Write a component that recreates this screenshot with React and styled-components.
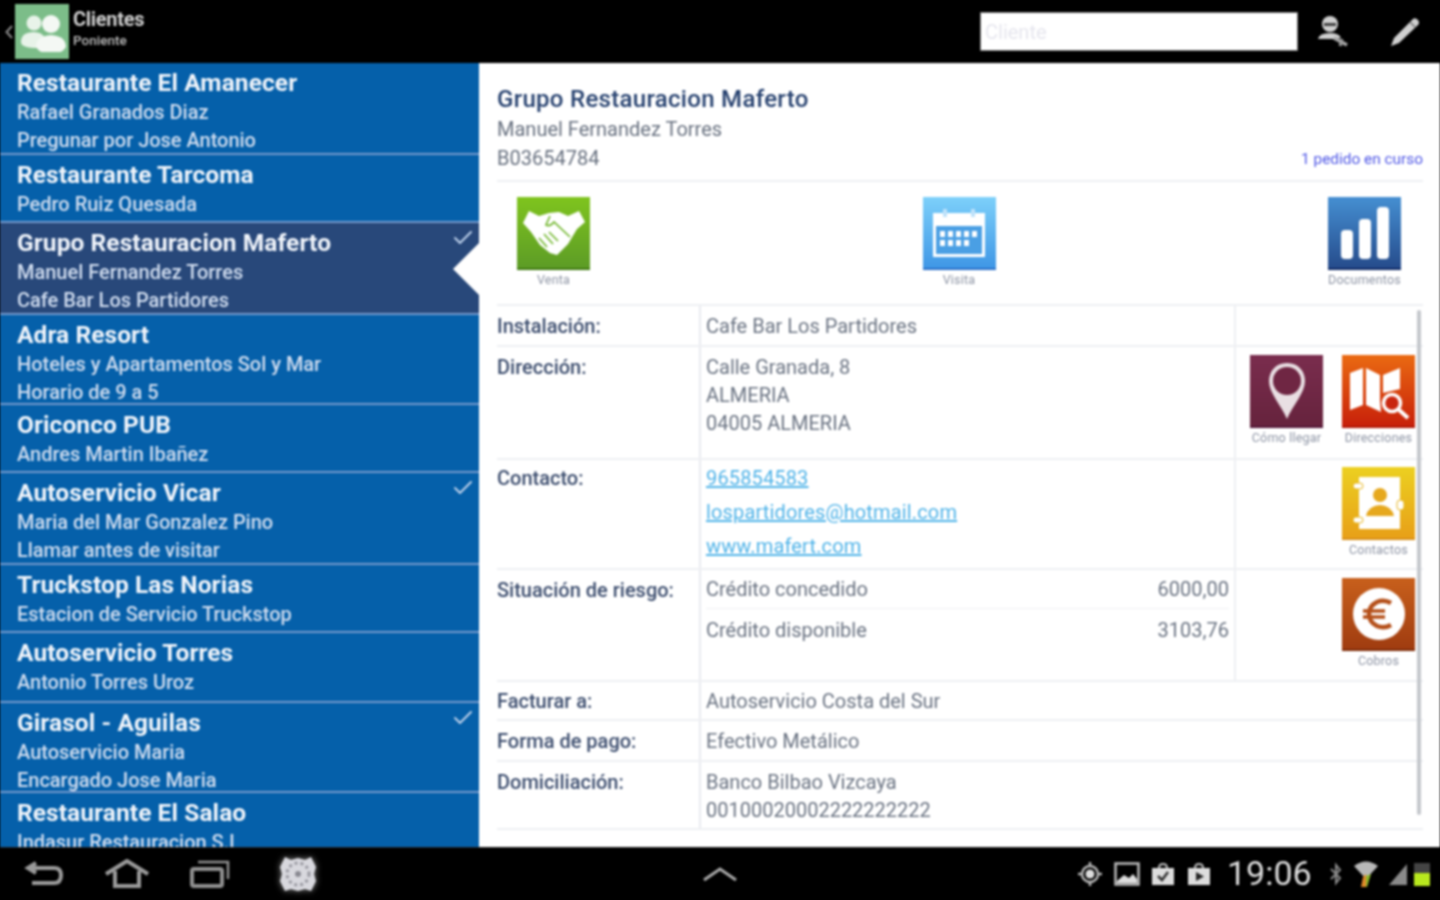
import React from "react";
import styled, { createGlobalStyle } from "styled-components";
import { Check } from "lucide-react";

const Global = createGlobalStyle`
  html, body { margin: 0; padding: 0; height: 100%; background: #000; overflow: hidden; }
  * { box-sizing: border-box; }
`;

const Screen = styled.div`
  width: 1440px; height: 900px; display: flex; flex-direction: column;
  font-family: Roboto, "Noto Sans", sans-serif; filter: blur(0.8px); overflow: hidden; background: #000;
`;
const TopBar = styled.header`
  height: 63px; flex: none; background: #000; display: flex; align-items: center; padding: 0 0 0 5px;
`;
const Back = styled.svg`width: 8px; height: 14px; margin-right: 2px; flex: none;`;
const AppIcon = styled.div`
  width: 54px; height: 55px; background: #7cbd89; display: flex; align-items: center; justify-content: center; flex: none;
`;
const AppTitles = styled.div`margin-left: 4px; display: flex; flex-direction: column; margin-top: -8px;`;
const AppTitle = styled.div`color: #cfcfcf; font-size: 20px; font-weight: 700; line-height: 24px; letter-spacing: -0.3px;`;
const AppSub = styled.div`color: #bcbcbc; font-size: 13.5px; font-weight: 500; line-height: 18px;`;
const Search = styled.div`
  width: 316px; height: 37px; margin-left: auto; background: #fff; color: #e6e6ee; font-size: 20px; padding: 0 4px;
  display: flex; align-items: center; box-shadow: 0 0 0 1px #777;
`;
const TopAction = styled.svg`width: 36px; height: 36px; flex: none; margin-left: ${p => p.$gap}px; margin-right: ${p => p.$right || 0}px;`;

const Main = styled.main`flex: 1; min-height: 0; display: flex; background: #fff; box-shadow: inset 0 1px 0 #555;`;
const List = styled.nav`width: 479px; flex: none; background: #0560aa; overflow: hidden;`;
const Row = styled.div`
  position: relative; height: ${p => p.$h}px; padding: 4px 17px 0; overflow: hidden;
  background: ${p => (p.$selected ? "#28487a" : "#0560aa")};
  border-bottom: 2.5px solid #7398cc;
`;
const RowTitle = styled.div`color: #f1f5fb; font-size: 24.5px; font-weight: 700; line-height: 31px; white-space: nowrap; letter-spacing: 0.08px;`;
const RowSub = styled.div`color: #d2def0; font-size: 20px; font-weight: 500; line-height: 28px; white-space: nowrap; letter-spacing: -0.02px;`;
const Tick = styled.div`position: absolute; right: 4px; top: 3px; color: #bcd0ea; display: flex;`;
const Notch = styled.div`
  position: absolute; right: 0; top: 20px; width: 0; height: 0;
  border-top: 26px solid transparent; border-bottom: 26px solid transparent; border-right: 26px solid #fff;
`;

const Detail = styled.section`flex: 1; min-width: 0; padding: 20px 17px 0 18px; position: relative; background: #fff;`;
const Head = styled.div`position: relative; height: 99px; border-bottom: 2px solid #eef0f3;`;
const Name = styled.div`color: #26416f; font-size: 24px; font-weight: 500; line-height: 32px; letter-spacing: 0.3px;`;
const HeadSub = styled.div`color: #67707f; font-size: 20px; line-height: 29px;`;
const Pending = styled.div`position: absolute; right: 0; top: 67px; color: #4f57e6; font-size: 15.4px; line-height: 18px;`;

const Shortcuts = styled.div`display: flex; justify-content: space-between; padding: 15px 22px 0 20px; height: 122px;`;
const Tile = styled.div`display: flex; flex-direction: column; align-items: center; width: 73px; flex: none;`;
const TileBox = styled.div`
  width: 73px; height: 73px; display: flex; align-items: center; justify-content: center; flex: none;
  background: linear-gradient(${p => p.$from}, ${p => p.$to});
  border-bottom: 2px solid ${p => p.$edge};
`;
const TileLabel = styled.div`color: #8d94a4; font-size: 12.5px; line-height: 20px; white-space: nowrap; letter-spacing: 0.2px;`;

const Table = styled.div`border-top: 2px solid #eef0f3; border-bottom: 2px solid #eef0f3;`;
const TRow = styled.div`
  display: grid; grid-template-columns: 202px 1fr; height: ${p => p.$h}px;
  & + & { border-top: 2px solid #eef0f3; }
`;
const Label = styled.div`color: #3c4d6e; font-size: 20px; font-weight: 500; line-height: 28px; padding-top: ${p => p.$pt ?? 6}px; white-space: nowrap;`;
const Cell = styled.div`border-left: 2px solid #e8eaf0; display: grid; grid-template-columns: 535px 1fr; min-width: 0;`;
const Wide = styled.div`border-left: 2px solid #e8eaf0; padding: ${p => p.$pt ?? 6}px 0 0 5px; color: #6a7382; font-size: 20px; line-height: 28px; white-space: nowrap;`;
const Value = styled.div`padding: ${p => p.$pt ?? 6}px 5px 0 5px; color: #6a7382; font-size: 20px; line-height: 28px; white-space: nowrap; border-right: 2px solid #eef0f3;`;
const Link = styled.a`display: block; width: fit-content; color: #4fb3e8; text-decoration: underline; line-height: 34px; font-size: 20px; letter-spacing: 0.15px;`;
const Pair = styled.div`display: flex; justify-content: space-between; height: ${p => p.$h}px; align-items: center; & + & { border-top: 1px solid #f0f1f4; }`;
const Aside = styled.div`display: flex; justify-content: flex-end; gap: 19px; padding: ${p => p.$pt ?? 8}px 8px 0 0;`;
const Scrollbar = styled.div`position: absolute; left: 938px; top: 247px; width: 4px; height: 505px; background: #c4c7cc; border-radius: 2px;`;

const BottomBar = styled.footer`
  height: 53px; flex: none; background: #000; display: flex; align-items: center; padding: 0 9px 0 24px; box-shadow: inset 0 1px 0 #222;
`;
const NavIcon = styled.svg`flex: none; margin-right: ${p => p.$mr}px;`;
const GearIcon = styled.svg`flex: none; margin-right: ${p => p.$mr}px; filter: drop-shadow(0 0 3px #ffffff88);`;
const Clock = styled.div`color: #dcdcdc; font-size: 34px; font-weight: 400; line-height: 53px; margin: 0 18px 0 16px;`;
const StatusIcon = styled.svg`flex: none; margin-right: ${p => p.$mr || 0}px;`;

const rows = [
  { h: 92, t: "Restaurante El Amanecer", s: ["Rafael Granados Diaz", "Pregunar por Jose Antonio"] },
  { h: 68, t: "Restaurante Tarcoma", s: ["Pedro Ruiz Quesada"] },
  { h: 92, t: "Grupo Restauracion Maferto", s: ["Manuel Fernandez Torres", "Cafe Bar Los Partidores"], sel: true, tick: true },
  { h: 90, t: "Adra Resort", s: ["Hoteles y Apartamentos Sol y Mar", "Horario de 9 a 5"] },
  { h: 68, t: "Oriconco PUB", s: ["Andres Martin Ibañez"] },
  { h: 92, t: "Autoservicio Vicar", s: ["Maria del Mar Gonzalez Pino", "Llamar antes de visitar"], tick: true },
  { h: 68, t: "Truckstop Las Norias", s: ["Estacion de Servicio Truckstop"] },
  { h: 70, t: "Autoservicio Torres", s: ["Antonio Torres Uroz"] },
  { h: 90, t: "Girasol - Aguilas", s: ["Autoservicio Maria", "Encargado Jose Maria"], tick: true },
  { h: 92, t: "Restaurante El Salao", s: ["Indasur Restauracion S.L"] },
];

const Handshake = () => (
  <svg width="64" height="50" viewBox="0 0 64 50" fill="#fff">
    <path d="M7 3 L17 8 L27 5 L37 4 L46 8 L57 3 L63 14 L55 21 L46 36 L35 47 L28 45 L18 37 L9 24 L1 15 Z" />
    <path d="M28 8 L24 17 Q28 19 32 14 L48 29 M17 30 L25 39 M22 26 L31 36 M27 24 L36 33" stroke="#6fb52a" strokeWidth="1.6" fill="none" />
  </svg>
);
const Calendar = () => (
  <svg width="54" height="48" viewBox="0 0 54 48">
    <rect x="1" y="4" width="52" height="44" fill="#fff" />
    <rect x="4" y="17" width="46" height="28" fill="#4a9fe4" />
    <rect x="11" y="0" width="4" height="8" fill="#bfe2fa" /><rect x="39" y="0" width="4" height="8" fill="#bfe2fa" />
    {[0, 1, 2, 3, 4].flatMap(i => [0, 1].map(j => (i === 4 && j === 1 ? null : <rect key={i + "-" + j} x={8 + i * 8} y={22 + j * 9} width="5" height="6" fill="#fff" />)))}
  </svg>
);
const Bars = () => (
  <svg width="50" height="56" viewBox="0 0 50 56" fill="#fff">
    <rect x="1" y="25" width="12" height="29" rx="4" /><rect x="19" y="14" width="12" height="40" rx="4" /><rect x="37" y="2" width="12" height="52" rx="4" />
  </svg>
);
const Pin = () => (
  <svg width="40" height="60" viewBox="0 0 40 60">
    <path d="M20 2 C8 2 2 11 2 20 C2 32 14 44 20 58 C26 44 38 32 38 20 C38 11 32 2 20 2 Z" fill="#e9dfe3" />
    <circle cx="20" cy="20" r="14" fill="#6f2643" />
  </svg>
);
const MapIcon = () => (
  <svg width="73" height="71" viewBox="0 0 73 71">
    <path d="M8 18 L21 13 L21 50 L8 55 Z M24 13 L38 20 L38 45 L39 57 L24 50 Z M41 20 L58 13 L58 34 L41 38 Z" fill="#fff" />
    <circle cx="50" cy="48" r="8.5" fill="#c9260f" stroke="#fff" strokeWidth="3.5" />
    <path d="M56 54 L66 63" stroke="#fff" strokeWidth="4" />
  </svg>
);
const Contacts = () => (
  <svg width="52" height="58" viewBox="0 0 52 58">
    <path d="M6 3 H47 V55 H6 Z" fill="#fff" />
    <rect x="0" y="9" width="10" height="6" rx="3" fill="#fff" stroke="#e6b51e" /><rect x="0" y="43" width="10" height="6" rx="3" fill="#fff" stroke="#e6b51e" /><rect x="44" y="26" width="7" height="10" rx="3" fill="#fff" stroke="#e6b51e" />
    <circle cx="27" cy="21" r="7" fill="#e6a81e" /><path d="M13 42 Q15 32 27 31 Q39 32 41 42 Z" fill="#e6a81e" />
  </svg>
);
const Euro = () => (
  <svg width="52" height="52" viewBox="0 0 52 52">
    <circle cx="26" cy="26" r="26" fill="#fff" />
    <path d="M38 15 Q31 11 24 14 Q16 18 16 26 Q16 34 24 38 Q31 41 38 37" fill="none" stroke="#b5501a" strokeWidth="4.5" />
    <path d="M10 23 H32 M10 29 H32" stroke="#b5501a" strokeWidth="3.5" />
  </svg>
);

export default function App() {
  return (
    <Screen>
      <Global />
      <TopBar>
        <Back viewBox="0 0 8 14"><path d="M7 1 L1.5 7 L7 13" fill="none" stroke="#8a8a8a" strokeWidth="2" /></Back>
        <AppIcon>
          <svg width="48" height="40" viewBox="0 0 48 40" fill="#f4f8f4">
            <circle cx="16" cy="11" r="7.5" opacity=".9" /><path d="M3 30 Q3 20 16 20 Q24 20 27 26 L20 36 Q3 36 3 30 Z" opacity=".9" />
            <circle cx="33" cy="12" r="9" /><path d="M18 35 Q18 24 33 23 Q48 24 48 35 Q44 42 33 42 Q22 42 18 35 Z" />
          </svg>
        </AppIcon>
        <AppTitles>
          <AppTitle>Clientes</AppTitle>
          <AppSub>Poniente</AppSub>
        </AppTitles>
        <Search>Cliente</Search>
        <TopAction $gap={17} viewBox="0 0 36 36" fill="#cfcfcf">
          <circle cx="16" cy="10" r="8" /><rect x="10" y="9" width="12" height="3" fill="#444" />
          <path d="M4 25 Q5 19 16 19 Q25 19 27 24 L20 25 Z" />
          <path d="M20 24 L33 31" stroke="#a8a8a8" strokeWidth="3.5" /><path d="M28 25 L26 32" stroke="#999" strokeWidth="3" />
        </TopAction>
        <TopAction $gap={37} $right={17} viewBox="0 0 36 36" fill="#d0d0d0">
          <path d="M4 32 L7 24 L26 5 Q28 3 31 6 Q33 9 31 11 L12 29 Z" /><path d="M23 8 L28 13" stroke="#777" strokeWidth="1.5" />
        </TopAction>
      </TopBar>
      <Main>
        <List>
          {rows.map(r => (
            <Row key={r.t} $h={r.h} $selected={r.sel}>
              <RowTitle>{r.t}</RowTitle>
              {r.s.map(x => <RowSub key={x}>{x}</RowSub>)}
              {r.tick && <Tick><Check size={24} strokeWidth={2} /></Tick>}
              {r.sel && <Notch />}
            </Row>
          ))}
        </List>
        <Detail>
          <Head>
            <Name>Grupo Restauracion Maferto</Name>
            <HeadSub>Manuel Fernandez Torres</HeadSub>
            <HeadSub>B03654784</HeadSub>
            <Pending>1 pedido en curso</Pending>
          </Head>
          <Shortcuts>
            <Tile><TileBox $from="#7fc41e" $to="#5d9c26" $edge="#3f7a0f"><Handshake /></TileBox><TileLabel>Venta</TileLabel></Tile>
            <Tile><TileBox $from="#7dd0fa" $to="#3f97e6" $edge="#2a70c8"><Calendar /></TileBox><TileLabel>Visita</TileLabel></Tile>
            <Tile><TileBox $from="#458fd2" $to="#264c8c" $edge="#102a66"><Bars /></TileBox><TileLabel>Documentos</TileLabel></Tile>
          </Shortcuts>
          <Table>
            <TRow $h={39}>
              <Label $pt={6}>Instalación:</Label>
              <Cell><Value>Cafe Bar Los Partidores</Value><div /></Cell>
            </TRow>
            <TRow $h={113}>
              <Label $pt={6}>Dirección:</Label>
              <Cell>
                <Value>Calle Granada, 8<br />ALMERIA<br />04005 ALMERIA</Value>
                <Aside>
                  <Tile><TileBox $from="#7a2d4e" $to="#66233d" $edge="#55193a"><Pin /></TileBox><TileLabel>Cómo llegar</TileLabel></Tile>
                  <Tile><TileBox $from="#ea6a12" $to="#c8200a" $edge="#b01808"><MapIcon /></TileBox><TileLabel>Direcciones</TileLabel></Tile>
                </Aside>
              </Cell>
            </TRow>
            <TRow $h={110}>
              <Label $pt={4}>Contacto:</Label>
              <Cell>
                <Value $pt={1}>
                  <Link>965854583</Link>
                  <Link>lospartidores@hotmail.com</Link>
                  <Link>www.mafert.com</Link>
                </Value>
                <Aside $pt={7}>
                  <Tile><TileBox $from="#ecd021" $to="#e8a018" $edge="#d8901a"><Contacts /></TileBox><TileLabel>Contactos</TileLabel></Tile>
                </Aside>
              </Cell>
            </TRow>
            <TRow $h={112}>
              <Label>Situación de riesgo:</Label>
              <Cell>
                <Value $pt={0}>
                  <Pair $h={38}><span>Crédito concedido</span><span>6000,00</span></Pair>
                  <Pair $h={43}><span>Crédito disponible</span><span>3103,76</span></Pair>
                </Value>
                <Aside>
                  <Tile><TileBox $from="#c8601c" $to="#a03c10" $edge="#7e2c0a"><Euro /></TileBox><TileLabel>Cobros</TileLabel></Tile>
                </Aside>
              </Cell>
            </TRow>
            <TRow $h={39}><Label $pt={5}>Facturar a:</Label><Wide $pt={5}>Autoservicio Costa del Sur</Wide></TRow>
            <TRow $h={41}><Label $pt={6}>Forma de pago:</Label><Wide>Efectivo Metálico</Wide></TRow>
            <TRow $h={68}><Label $pt={6}>Domiciliación:</Label><Wide>Banco Bilbao Vizcaya<br />00100020002222222222</Wide></TRow>
          </Table>
          <Scrollbar />
        </Detail>
      </Main>
      <BottomBar>
        <NavIcon $mr={40} width="40" height="30" viewBox="0 0 40 30" fill="none" stroke="#9a9a9a" strokeWidth="4">
          <path d="M12 4 L4 9 L12 14 M5 9 H30 Q37 9 37 16 Q37 24 30 24 H8" />
        </NavIcon>
        <NavIcon $mr={40} width="46" height="30" viewBox="0 0 46 30" fill="none" stroke="#9a9a9a" strokeWidth="4">
          <path d="M2 15 L23 2 L44 15 M11 12 V27 H35 V12" />
        </NavIcon>
        <NavIcon $mr={47} width="40" height="30" viewBox="0 0 40 30" fill="none" stroke="#8f8f8f" strokeWidth="4">
          <rect x="2" y="10" width="30" height="17" rx="2" /><path d="M8 3 H38 V20" strokeWidth="2.5" />
        </NavIcon>
        <GearIcon $mr={384} width="42" height="42" viewBox="0 0 42 42">
          <path d="M8 4 L14 7 L21 5 L28 7 L34 4 L39 14 L37 21 L39 28 L34 38 L28 36 L21 38 L14 36 L8 38 L3 28 L5 21 L3 14 Z" fill="#d8d8de" />
          <circle cx="21" cy="21" r="11" fill="none" stroke="#9a9aa2" strokeWidth="3" strokeDasharray="3 3" />
          <circle cx="21" cy="21" r="3" fill="#8a8a92" />
        </GearIcon>
        <NavIcon $mr={340} width="34" height="16" viewBox="0 0 34 16" fill="none" stroke="#a8a8a8" strokeWidth="3">
          <path d="M1 14 L17 3 L33 14" />
        </NavIcon>
        <StatusIcon $mr={11} width="26" height="26" viewBox="0 0 26 26">
          <circle cx="13" cy="13" r="8" fill="none" stroke="#b5b5b5" strokeWidth="2.5" /><circle cx="13" cy="13" r="4.5" fill="#ddd" />
          <path d="M13 1 V5 M13 21 V25 M1 13 H5 M21 13 H25" stroke="#b5b5b5" strokeWidth="2.5" />
        </StatusIcon>
        <StatusIcon $mr={11} width="26" height="24" viewBox="0 0 26 24">
          <rect x="1.5" y="1.5" width="23" height="21" fill="none" stroke="#bbb" strokeWidth="2.5" />
          <path d="M3 19 L10 13 L15 16 L19 12 L23 17 V21 H3 Z" fill="#ddd" />
        </StatusIcon>
        <StatusIcon $mr={12} width="24" height="24" viewBox="0 0 24 24">
          <path d="M8 6 Q8 2 12 2 Q16 2 16 6" fill="none" stroke="#bbb" strokeWidth="2" />
          <rect x="1" y="6" width="22" height="17" fill="#ddd" />
          <path d="M7 14 L11 18 L17 10" fill="none" stroke="#333" strokeWidth="2.5" />
        </StatusIcon>
        <StatusIcon width="24" height="24" viewBox="0 0 24 24">
          <path d="M8 6 Q8 2 12 2 Q16 2 16 6" fill="none" stroke="#bbb" strokeWidth="2" />
          <rect x="1" y="6" width="22" height="17" fill="#ddd" />
          <path d="M9 10 L17 14.5 L9 19 Z" fill="#222" />
        </StatusIcon>
        <Clock>19:06</Clock>
        <StatusIcon $mr={11} width="12" height="24" viewBox="0 0 12 24" fill="none" stroke="#888" strokeWidth="2">
          <path d="M1 7 L10 16 L6 21 V3 L10 8 L1 17" />
        </StatusIcon>
        <StatusIcon $mr={9} width="26" height="28" viewBox="0 0 26 28">
          <path d="M1 6 Q13 -3 25 6 L13 19 Z" fill="#b8b8b8" />
          <path d="M10 17 L13 14 V27 H8 Z" fill="#e08a2a" /><path d="M13 16 L18 14 L14 27 H13 Z" fill="#8bb82a" />
        </StatusIcon>
        <StatusIcon $mr={6} width="20" height="24" viewBox="0 0 20 24">
          <path d="M1 23 L19 2 V23 Z" fill="#8a8a8a" />
        </StatusIcon>
        <StatusIcon width="16" height="26" viewBox="0 0 16 26">
          <rect x="0" y="2" width="16" height="10" fill="#444" />
          <rect x="0" y="12" width="16" height="13" fill="#b8e81e" />
        </StatusIcon>
      </BottomBar>
    </Screen>
  );
}
